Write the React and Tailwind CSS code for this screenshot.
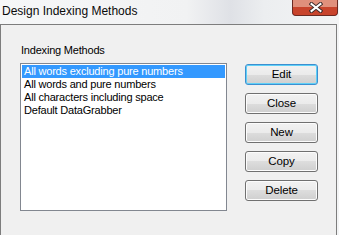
import React from 'react';

const methods = [
  'All words excluding pure numbers',
  'All words and pure numbers',
  'All characters including space',
  'Default DataGrabber',
];

const buttons = ['Edit', 'Close', 'New', 'Copy', 'Delete'];

const WinButton = ({ label, primary }) => (
  <button
    className={
      'h-[21px] w-[73px] rounded-[3px] border text-[11.5px] tracking-[-0.1px] text-black ' +
      'bg-[linear-gradient(to_bottom,#f2f2f2_0%,#ebebeb_50%,#dddddd_50%,#cfcfcf_100%)] ' +
      (primary
        ? 'border-[#3c8fd0] shadow-[inset_0_0_0_1px_#5fd0f7]'
        : 'border-[#707070] shadow-[inset_0_0_0_1px_#fcfcfc]')
    }
  >
    {label}
  </button>
);

export default function App() {
  return (
    <div
      className="w-[339px] h-[235px] flex flex-col overflow-hidden bg-[linear-gradient(90deg,#f6f7f8_0%,#f1f2f3_55%,#dfe1e6_68%,#eceef0_78%,#f3f4f5_100%)]"
      style={{ fontFamily: '"Liberation Sans", Arial, sans-serif' }}
    >
      {/* Title bar */}
      <div className="h-[24px] flex items-start shrink-0">
        <div className="pl-[2px] pt-[4px] text-[12px] leading-[14px] text-[#0a0a0a]">
          Design Indexing Methods
        </div>
        <div className="ml-auto mr-[1px] h-[16px] w-[46px] rounded-b-[4px] border border-t-0 border-[#6a2a22] bg-red-700 flex flex-col overflow-hidden relative">
          <div className="h-[7px] bg-[#e0907c]" />
          <div className="flex-1 bg-[#c8442c]" />
          <svg className="absolute left-[16px] top-[2px]" width="14" height="11" viewBox="0 0 14 11">
            <path d="M2.5 2 L11.5 9 M11.5 2 L2.5 9" stroke="#3b2b2b" strokeWidth="4" strokeLinecap="square" />
            <path d="M2.5 2 L11.5 9 M11.5 2 L2.5 9" stroke="#ffffff" strokeWidth="2" strokeLinecap="square" />
          </svg>
        </div>
      </div>

      {/* Client area */}
      <div className="flex-1 mr-[2px] border border-b-0 border-[#7d7d7d] bg-[#f0f0f0] flex text-[11px] tracking-[-0.2px]">
        <div className="pl-[19px] pt-[19px] flex flex-col">
          <div className="pl-[1px] leading-[13px] h-[19px]">Indexing Methods</div>
          <div className="w-[207px] h-[148px] border border-[#828790] bg-white p-[1px]">
            {methods.map((m, i) => (
              <div
                key={m}
                className={
                  'h-[13px] leading-[13px] pl-[2px] ' +
                  (i === 0 ? 'bg-[#3399ff] text-white' : 'text-black')
                }
              >
                {m}
              </div>
            ))}
          </div>
        </div>
        <div className="ml-[18px] pt-[39px] flex flex-col gap-[8px]">
          {buttons.map((b, i) => (
            <WinButton key={b} label={b} primary={i === 0} />
          ))}
        </div>
      </div>
    </div>
  );
}
